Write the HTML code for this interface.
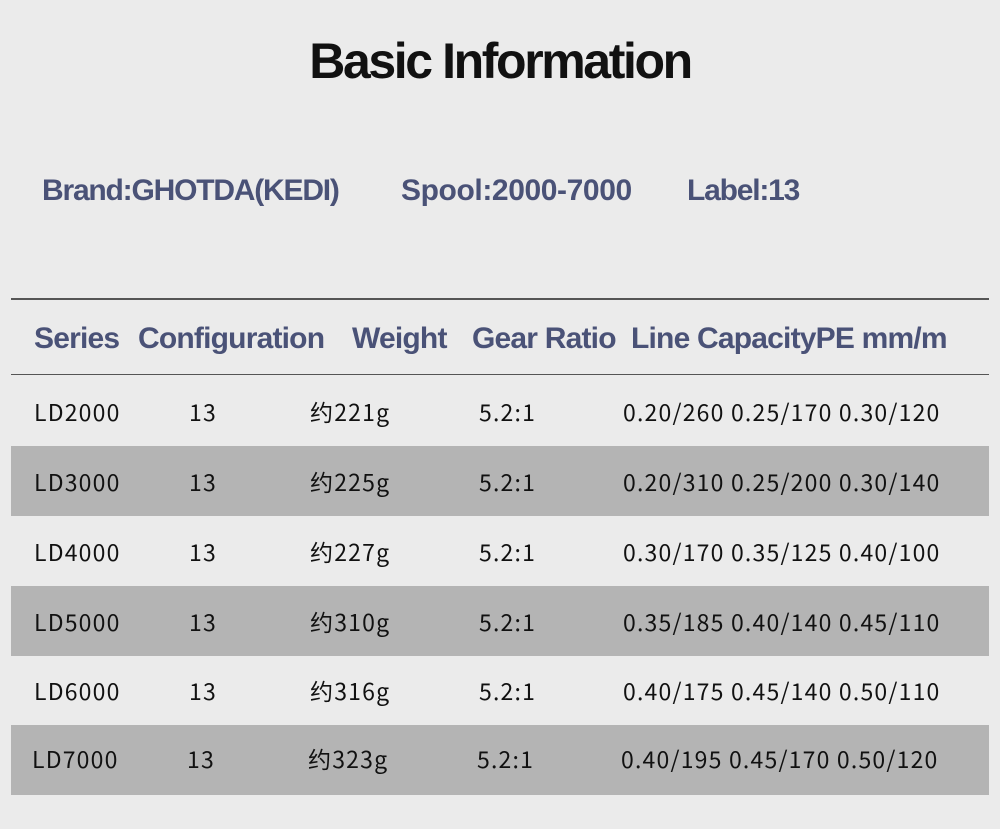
<!DOCTYPE html>
<html><head><meta charset="utf-8"><style>
body{margin:0;width:1000px;height:829px;background:#ebebeb;position:relative;overflow:hidden;font-family:"Liberation Sans","Noto Sans CJK SC",sans-serif}
.t{position:absolute;white-space:nowrap}
.title{left:0;width:1000px;text-align:center;top:32px;font-size:50px;font-weight:bold;letter-spacing:-2.4px;color:#111}
.b{font-weight:bold;color:#4a5277;font-size:30px;letter-spacing:-1.2px}
.h{font-weight:bold;color:#4a5277;font-size:30px;letter-spacing:-0.8px;top:322px}
.row{position:absolute;left:11px;width:978px;height:70px}
.g{background:#b4b4b4}
.c{position:absolute;font-size:23px;color:#111;font-family:"Noto Sans CJK SC",sans-serif;letter-spacing:1.2px;line-height:70px;top:0}
</style></head><body>
<div class="t title">Basic Information</div>
<div class="t b" style="left:42px;top:174px">Brand:GHOTDA(KEDI)</div>
<div class="t b" style="left:401px;top:174px;letter-spacing:-0.4px">Spool:2000-7000</div>
<div class="t b" style="left:687px;top:174px">Label:13</div>
<div style="position:absolute;left:11px;width:978px;top:298px;height:2px;background:#555"></div>
<div class="t h" style="left:34px">Series</div>
<div class="t h" style="left:138px">Configuration</div>
<div class="t h" style="left:352px">Weight</div>
<div class="t h" style="left:472px">Gear Ratio</div>
<div class="t h" style="left:631px">Line CapacityPE mm/m</div>
<div style="position:absolute;left:11px;width:978px;top:374px;height:1px;background:#555"></div>
<div class="row" style="top:376px"><span class="c" style="left:23px">LD2000</span><span class="c" style="left:178px">13</span><span class="c" style="left:299px">约221g</span><span class="c" style="left:468px">5.2:1</span><span class="c" style="left:612px">0.20/260 0.25/170 0.30/120</span></div>
<div class="row g" style="top:446px"><span class="c" style="left:23px">LD3000</span><span class="c" style="left:178px">13</span><span class="c" style="left:299px">约225g</span><span class="c" style="left:468px">5.2:1</span><span class="c" style="left:612px">0.20/310 0.25/200 0.30/140</span></div>
<div class="row" style="top:516px"><span class="c" style="left:23px">LD4000</span><span class="c" style="left:178px">13</span><span class="c" style="left:299px">约227g</span><span class="c" style="left:468px">5.2:1</span><span class="c" style="left:612px">0.30/170 0.35/125 0.40/100</span></div>
<div class="row g" style="top:586px"><span class="c" style="left:23px">LD5000</span><span class="c" style="left:178px">13</span><span class="c" style="left:299px">约310g</span><span class="c" style="left:468px">5.2:1</span><span class="c" style="left:612px">0.35/185 0.40/140 0.45/110</span></div>
<div class="row" style="top:655px"><span class="c" style="left:23px">LD6000</span><span class="c" style="left:178px">13</span><span class="c" style="left:299px">约316g</span><span class="c" style="left:468px">5.2:1</span><span class="c" style="left:612px">0.40/175 0.45/140 0.50/110</span></div>
<div class="row g" style="top:725px"><span class="c" style="left:21px;top:-2px">LD7000</span><span class="c" style="left:176px;top:-2px">13</span><span class="c" style="left:297px;top:-2px">约323g</span><span class="c" style="left:466px;top:-2px">5.2:1</span><span class="c" style="left:610px;top:-2px">0.40/195 0.45/170 0.50/120</span></div>
</body></html>
